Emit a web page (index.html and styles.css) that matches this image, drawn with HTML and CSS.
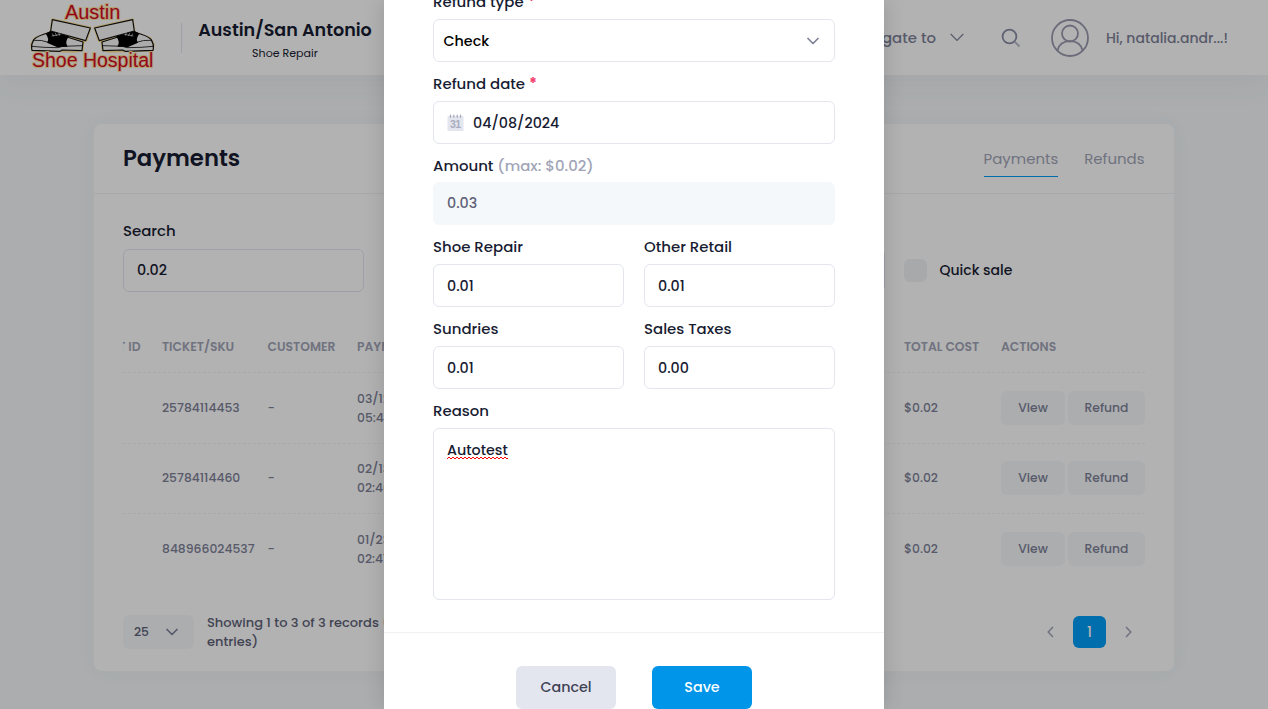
FILE: index.html
```html
<!DOCTYPE html>
<html lang="en">
<head>
<meta charset="utf-8">
<title>Payments</title>
<link rel="stylesheet" href="styles.css">
</head>
<body>
<div class="page">
  <header class="header">
    <svg class="logo" viewBox="0 0 405 228" width="135" height="76">
      <g id="shoe" stroke-linejoin="round">
        <path class="shoe-glow" d="M82 58 196 83 184 121 174 127 173 150 150 155 22 151 19 132 30 114 77 97Z"/>
        <path class="shoe-body" d="M78 96C60 101 40 106 27 118Q18 132 20 145L21 151 105 154 112 150 171 152 174 126Z"/>
        <path class="shoe-black" d="M77 92 132 109Q118 126 128 140L97 142 66 128Q74 116 62 101Z"/>
        <path class="shoe-body" d="M82 59 196 84 182 122 77 93Z"/>
        <path class="shoe-line" d="M20 139Q55 143 99 143L112 139 172 137M27 121Q50 119 70 127"/>
        <path class="shoe-lace" d="M82 101l4 8M91 99l4 9M101 97l3 10M80 108l27-5"/>
      </g>
      <use href="#shoe" transform="matrix(-1 0 0 1 405 0)"/>
      <g class="logo-glow">
        <text x="120" y="56" font-size="59" textLength="166" lengthAdjust="spacingAndGlyphs">Austin</text>
        <text x="21" y="201" font-size="58" textLength="364" lengthAdjust="spacingAndGlyphs">Shoe Hospital</text>
      </g>
    </svg>
    <div class="divider"></div>
    <div class="store">
      <div class="store-name">Austin/San Antonio</div>
      <div class="store-type">Shoe Repair</div>
    </div>
    <div class="header-tools">
      <span class="navigate">Navigate to</span>
      <svg class="nav-arrow" width="14" height="9" viewBox="0 0 14 9"><path d="M.7 1 7 7.300 13.300 1"/></svg>
      <svg class="search-icon" width="20" height="20" viewBox="0 0 20 20"><circle cx="8.500" cy="8.500" r="6.900"/><path class="handle" d="m13.500 13.500 5 5"/></svg>
      <svg class="avatar" width="38" height="38" viewBox="0 0 38 38"><circle cx="19" cy="19" r="18"/><circle cx="19" cy="14.500" r="8"/><path d="M6.500 31.500C8 25 13 22.200 19 22.200S30 25 31.500 31.500"/></svg>
      <span class="greeting">Hi, natalia.andr...!</span>
    </div>
  </header>

  <main class="card">
    <div class="card-head">
      <h1>Payments</h1>
      <nav class="tabs"><a class="tab active">Payments</a><a class="tab">Refunds</a></nav>
    </div>
    <div class="card-body">
      <div class="filters">
        <div class="search">
          <div class="label search-label">Search</div>
          <div class="input search-input">0.02</div>
        </div>
        <div class="hidden-filter"></div>
        <div class="quick"><span class="checkbox"></span><span>Quick sale</span></div>
      </div>
      <div class="table">
        <div class="row row-head">
          <div class="clip"><span>PAYMENT ID</span></div><div>TICKET/SKU</div><div>CUSTOMER</div><div>PAYMENT DATE</div><div>TOTAL COST</div><div>ACTIONS</div>
        </div>
        <div class="row">
          <div></div><div>25784114453</div><div>-</div><div class="date">03/12/2024<br>05:42 PM</div><div>$0.02</div>
          <div class="actions"><span class="btn-sm view">View</span><span class="btn-sm refund">Refund</span></div>
        </div>
        <div class="row">
          <div></div><div>25784114460</div><div>-</div><div class="date">02/13/2024<br>02:46 PM</div><div>$0.02</div>
          <div class="actions"><span class="btn-sm view">View</span><span class="btn-sm refund">Refund</span></div>
        </div>
        <div class="row">
          <div></div><div>848966024537</div><div>-</div><div class="date">01/23/2024<br>02:47 PM</div><div>$0.02</div>
          <div class="actions"><span class="btn-sm view">View</span><span class="btn-sm refund">Refund</span></div>
        </div>
      </div>
      <div class="table-foot">
        <div class="page-size"><span>25</span><svg class="chevron" width="12" height="8" viewBox="0 0 12 8"><path d="m1 1.500 5 5 5-5"/></svg></div>
        <div class="summary">Showing 1 to 3 of 3 records (filtered<br>entries)</div>
        <div class="pager">
          <svg width="7" height="12" viewBox="0 0 7 12"><path d="M6 1 1.200 6 6 11"/></svg>
          <span class="page-current">1</span>
          <svg width="7" height="12" viewBox="0 0 7 12"><path d="m1 1 4.800 5L1 11"/></svg>
        </div>
      </div>
    </div>
  </main>

  <div class="overlay">
    <div class="modal">
      <div class="modal-body">
        <div class="field type-field">
          <div class="label">Refund type <b>*</b></div>
          <div class="input select"><span>Check</span><svg class="chevron" width="12" height="8" viewBox="0 0 12 8"><path d="m1 1.500 5 5 5-5"/></svg></div>
        </div>
        <div class="field">
          <div class="label">Refund date <b>*</b></div>
          <div class="input date-input">
            <svg width="17" height="18" viewBox="0 0 17 18"><path fill="#e4e6ef" d="M1.500 2h14q1 0 1 1v13q0 1-1 1h-14q-1 0-1-1V3q0-1 1-1Z"/><path fill="none" stroke="#a1a5b7" stroke-width="1.200" stroke-linecap="round" d="M3.500 1.200v2M6.800 1.200v2M10.200 1.200v2M13.500 1.200v2"/><text x="3" y="14" font-family="Liberation Sans" font-size="10.500" font-weight="700" fill="#a9acbf" textLength="11">31</text></svg>
            <span>04/08/2024</span>
          </div>
        </div>
        <div class="field amount-field">
          <div class="label">Amount <i>(max: $0.02)</i></div>
          <div class="input solid">0.03</div>
        </div>
        <div class="pair">
          <div class="field"><div class="label">Shoe Repair</div><div class="input">0.01</div></div>
          <div class="field"><div class="label">Other Retail</div><div class="input">0.01</div></div>
        </div>
        <div class="pair">
          <div class="field"><div class="label">Sundries</div><div class="input">0.01</div></div>
          <div class="field"><div class="label">Sales Taxes</div><div class="input">0.00</div></div>
        </div>
        <div class="field">
          <div class="label">Reason</div>
          <div class="input area"><span class="misspelled">Autotest<svg width="62" height="4" viewBox="0 0 62 4"><path d="M0 3l2-2 2 2 2-2 2 2 2-2 2 2 2-2 2 2 2-2 2 2 2-2 2 2 2-2 2 2 2-2 2 2 2-2 2 2 2-2 2 2 2-2 2 2 2-2 2 2 2-2 2 2 2-2 2 2 2-2 2 2 1-1"/></svg></span></div>
        </div>
      </div>
      <div class="modal-foot"><span class="btn cancel">Cancel</span><span class="btn save">Save</span></div>
    </div>
  </div>
</div>
</body>
</html>
```
FILE: styles.css
```css
* { box-sizing: border-box; }
body { margin: 0; font-family: Poppins, Inter, sans-serif; font-size: 13px; font-weight: 500; color: #181c32; }
.page { position: relative; width: 1268px; height: 709px; overflow: hidden; background: #f5f8fa; }
svg { flex: none; }

.header { height: 75px; background: #fff; display: flex; align-items: center; padding: 0 40px 0 25px; box-shadow: 0 10px 30px rgba(82,63,105,.05); }
.logo { margin-right: 21px; }
.logo-glow { font-family: "Liberation Sans", sans-serif; fill: #d3082b; stroke: #ffe49b; stroke-width: 6px; stroke-linejoin: round; paint-order: stroke; }
.shoe-glow { fill: #ffe49b; stroke: #ffe49b; stroke-width: 7; }
.shoe-body { fill: #f7f7f7; stroke: #111; stroke-width: 3.5; }
.shoe-black { fill: #000; }
.shoe-line { fill: none; stroke: #111; stroke-width: 2.5; }
.shoe-lace { fill: none; stroke: #eee; stroke-width: 2; }
.divider { width: 1px; height: 30px; background: #e4e6ef; margin-right: 16px; }
.store { width: 174px; text-align: center; white-space: nowrap; padding-top: 3px; }
.store-name { font-size: 17.55px; font-weight: 600; line-height: 28px; }
.store-type { font-size: 11.05px; font-weight: 400; line-height: 18px; }
.header-tools { margin-left: auto; display: flex; align-items: center; color: #7e8299; white-space: nowrap; }
.navigate { font-size: 14.95px; padding-top: 1px; }
.nav-arrow { margin: 0 37px 0 14px; fill: none; stroke: #7e8299; stroke-width: 1.2; }
.search-icon { fill: none; stroke: #8a8ea6; stroke-width: 1.8; }
.handle { stroke: #b5b8c8; }
.avatar { margin: 0 17px 0 30px; fill: none; stroke: #9a9ab0; stroke-width: 1.8; }
.greeting { font-size: 14px; width: 122px; padding-top: 1px; }

.card { width: 1080px; height: 547px; margin: 49px auto 0; background: #fff; border-radius: 8px; box-shadow: 0 0 20px rgba(76,87,125,.04); }
.card-head { height: 70px; border-bottom: 1px solid #eff2f5; padding: 0 29.5px 0 29px; display: flex; justify-content: space-between; align-items: center; }
h1 { font-size: 22.75px; font-weight: 600; margin: 0 0 2px; }
.tabs { display: flex; gap: 26px; font-size: 14.95px; font-weight: 400; color: #a1a5b7; }
.tab { line-height: 35px; height: 36px; margin-top: 1px; }
.active { border-bottom: 1px solid #009ef7; }
.card-body { padding: 26px 29px 0; }
.filters { display: flex; align-items: flex-end; height: 72px; }
.search { width: 241px; }
.label { font-size: 14.95px; line-height: 22px; margin-bottom: 6px; white-space: nowrap; }
.search-label { margin-bottom: 7px; }
.label b { color: #f1416c; font-weight: 700; }
.label i { color: #a1a5b7; font-style: normal; }
.input { height: 43px; border: 1px solid #e4e6ef; border-radius: 6px; padding: 1px 13px 0; display: flex; align-items: center; font-size: 14.3px; background: #fff; }
.search-input, .solid { padding-top: 0; padding-bottom: 1px; }
.hidden-filter { width: 241px; height: 43px; margin-left: 280px; border: 1px solid #e4e6ef; border-radius: 6px; }
.quick { display: flex; align-items: center; height: 43px; margin-left: 19px; gap: 12.5px; font-size: 14px; }
.checkbox { width: 23px; height: 23px; border-radius: 6px; background: #eff2f5; }

.table { margin-top: 28px; font-size: 12.35px; color: #7e8299; }
.row { display: grid; grid-template-columns: 39px 105.5px 89.5px 547px 97px 144px; align-items: center; height: 70.5px; border-bottom: 1px dashed #eff2f5; }
.row:last-child { border-bottom: 0; }
.row-head { height: 53px; color: #a1a5b7; font-weight: 600; padding-top: 2px; }
.clip { width: 17.5px; overflow: hidden; display: flex; justify-content: flex-end; white-space: nowrap; }
.date { line-height: 19px; }
.actions { display: flex; gap: 3px; }
.btn-sm { height: 34px; border-radius: 6px; background: #f5f8fa; display: flex; align-items: center; justify-content: center; }
.view { width: 64px; }
.refund { width: 77px; }
.table-foot { display: flex; align-items: center; margin-top: 28px; height: 38px; color: #5e6278; }
.page-size { width: 71px; height: 34px; border-radius: 6px; background: #f5f8fa; display: flex; align-items: center; justify-content: space-between; padding: 0 16px 0 11px; font-size: 12.35px; }
.chevron { fill: none; stroke: #7e8299; stroke-width: 1.7; stroke-linecap: round; stroke-linejoin: round; }
.summary { margin-left: 13px; line-height: 19px; font-size: 13px; white-space: nowrap; }
.pager { margin-left: auto; margin-right: 13px; display: flex; align-items: center; gap: 19px; }
.pager svg { fill: none; stroke: #a1a5b7; stroke-width: 1.5; }
.page-current { width: 33px; height: 32px; padding-top: 1px; border-radius: 6px; background: #009ef7; color: #fff; display: flex; align-items: center; justify-content: center; font-size: 14px; }

/* Dialog above the dimmed page */
.overlay { position: absolute; inset: 0; background: rgba(0,0,0,.3); display: flex; justify-content: center; overflow: hidden; }
.modal { width: 500px; background: #fff; height: 709px; box-shadow: 0 0 20px rgba(0,0,0,.15); }
.modal-body { height: 642px; padding: 0 49px; border-bottom: 1px solid #eff2f5; }
.field { margin-bottom: 11px; }
.type-field .label { margin-top: -9px; }
.amount-field .label { margin-bottom: 5px; }
.select { padding: 1px 15px 0 9.5px; justify-content: space-between; color: #000; }
.date-input { gap: 9px; }
.solid { background: #f5f8fa; border-color: #f5f8fa; color: #5e6278; }
.pair { display: grid; grid-template-columns: 191px 191px; gap: 20px; }
.area { height: 172px; align-items: flex-start; padding-top: 10px; line-height: 22px; }
.misspelled { position: relative; }
.misspelled svg { position: absolute; left: 0; top: 17px; fill: none; stroke: #f00; }
.modal-foot { display: flex; justify-content: center; gap: 36px; padding-top: 33px; }
.btn { width: 100px; height: 43px; border-radius: 6px; display: flex; align-items: center; justify-content: center; font-size: 14.3px; }
.cancel { background: #e4e6ef; color: #3f4254; }
.save { background: #0095e8; color: #fff; }
```
